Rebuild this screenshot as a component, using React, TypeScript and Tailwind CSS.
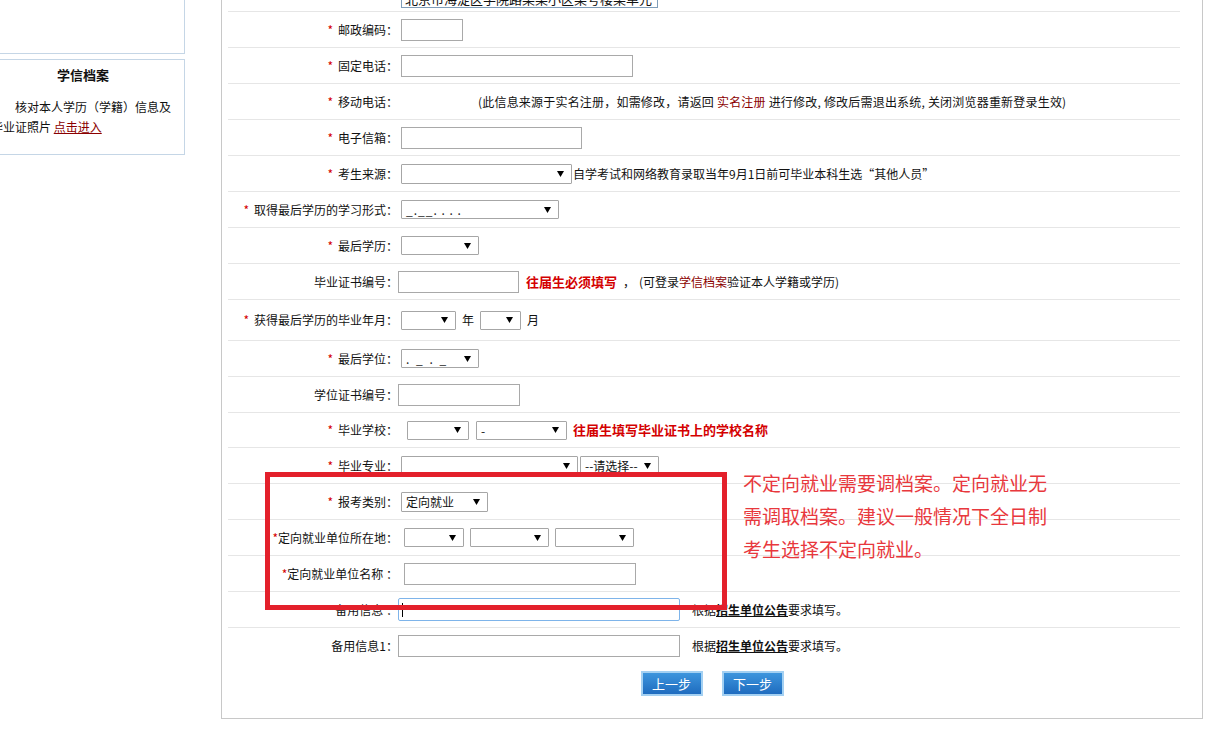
import React from "react";

const Star = () => <span className="mr-[5px] text-[#d40000]">*</span>;

const Label = ({ req, children }: { req?: boolean; children?: React.ReactNode }) => (
  <div className="w-[170px] shrink-0 text-right whitespace-nowrap">
    {req && <Star />}
    {children}
  </div>
);

const Arrow = () => (
  <svg width="7" height="6" viewBox="0 0 7 6" className="absolute right-[7px] top-1/2 -translate-y-1/2">
    <path d="M0 0H7L3.5 6Z" fill="#000" />
  </svg>
);

const Select = ({ className, text }: { className: string; text?: React.ReactNode }) => (
  <div className={"relative h-[19px] shrink-0 rounded-[1px] border border-[#a6a6a6] bg-white pl-[4px] text-[12px] leading-[17px] " + className}>
    {text}
    <Arrow />
  </div>
);

const Box = ({ className }: { className: string }) => (
  <div className={"h-[22px] shrink-0 border border-[#a9a9a9] bg-white " + className} />
);

const Row = ({ children, h = "h-[36px]", last }: { children: React.ReactNode; h?: string; last?: boolean }) => (
  <div className={"flex items-center " + h + (last ? "" : " border-b border-[#e6e6e6]")}>{children}</div>
);

const Hint = () => (
  <span>
    根据<b className="underline">招生单位公告</b>要求填写。
  </span>
);

export default function App() {
  return (
    <div className="relative h-[743px] w-[1227px] overflow-hidden bg-white text-[12px] text-[#111] [font-family:'SimSun','Noto_Sans_CJK_SC',sans-serif]">
      <div className="flex items-start">
        {/* sidebar, partly scrolled off to the left */}
        <aside className="ml-[-19px] w-[204px] shrink-0">
          <div className="mt-[-20px] h-[74px] border border-[#c5d6e6]" />
          <div className="mt-[5px] h-[96px] border border-[#c5d6e6] px-[9px]">
            <div className="pt-[5px] text-center text-[13px] font-bold leading-[20px]">学信档案</div>
            <p className="mt-[12px] indent-[24px] leading-[20px]">
              核对本人学历（学籍）信息及毕业证照片{" "}
              <a className="text-[#8b0000] underline">点击进入</a>
            </p>
          </div>
        </aside>

        {/* form panel */}
        <main className="ml-[36px] mt-[-40px] w-[982px] shrink-0 border border-[#c8c8c8] pt-[15px] pb-[22px]">
          <div className="ml-[6px] w-[952px]">
            <Row>
              <Label />
              <div className="ml-[3px] mt-[6px] h-[22px] w-[257px] overflow-hidden border border-[#7f9db9] px-[3px] text-[13px] leading-[24px]">
                北京市海淀区学院路某某小区某号楼某单元
              </div>
            </Row>
            <Row>
              <Label req>邮政编码：</Label>
              <Box className="ml-[3px] w-[62px]" />
            </Row>
            <Row>
              <Label req>固定电话：</Label>
              <Box className="ml-[3px] w-[232px]" />
            </Row>
            <Row>
              <Label req>移动电话：</Label>
              <div className="ml-[80px] whitespace-nowrap tracking-[0.2px]">
                (此信息来源于实名注册，如需修改，请返回 <span className="text-[#8b0000]">实名注册</span>{" "}
                进行修改, 修改后需退出系统, 关闭浏览器重新登录生效)
              </div>
            </Row>
            <Row>
              <Label req>电子信箱：</Label>
              <Box className="ml-[3px] w-[181px]" />
            </Row>
            <Row>
              <Label req>考生来源：</Label>
              <Select className="ml-[3px] h-[20px] w-[171px]" />
              <span className="ml-[1px] whitespace-nowrap">自学考试和网络教育录取当年9月1日前可毕业本科生选“其他人员”</span>
            </Row>
            <Row>
              <Label req>取得最后学历的学习形式：</Label>
              <Select className="ml-[3px] w-[158px]" text={<span className="tracking-[1px] text-[#222]">_.__. . . .</span>} />
            </Row>
            <Row>
              <Label req>最后学历：</Label>
              <Select className="ml-[3px] w-[78px]" />
            </Row>
            <Row>
              <Label>毕业证书编号：</Label>
              <Box className="w-[121px]" />
              <span className="ml-[7px] text-[13px] font-bold text-[#d40000]">往届生必须填写</span>
              <span className="ml-[6px]">，</span>
              <span className="ml-[4px] whitespace-nowrap">
                (可登录<span className="text-[#8b0000]">学信档案</span>验证本人学籍或学历)
              </span>
            </Row>
            <Row h="h-[41px]">
              <Label req>获得最后学历的毕业年月：</Label>
              <Select className="ml-[3px] w-[55px]" />
              <span className="ml-[6px]">年</span>
              <Select className="ml-[6px] w-[41px]" />
              <span className="ml-[6px]">月</span>
            </Row>
            <Row>
              <Label req>最后学位：</Label>
              <Select className="ml-[3px] w-[78px]" text={<span className="tracking-[2px] text-[#222]">. _ . _</span>} />
            </Row>
            <Row>
              <Label>学位证书编号：</Label>
              <Box className="w-[122px]" />
            </Row>
            <Row h="h-[35px]">
              <Label req>毕业学校：</Label>
              <Select className="ml-[9px] w-[62px]" />
              <Select className="ml-[7px] w-[91px]" text="-" />
              <span className="ml-[6px] text-[13px] font-bold text-[#d40000]">往届生填写毕业证书上的学校名称</span>
            </Row>
            <Row>
              <Label req>毕业专业：</Label>
              <Select className="ml-[3px] w-[177px]" />
              <Select className="ml-[2px] w-[79px]" text="--请选择--" />
            </Row>
            <Row>
              <Label req>报考类别：</Label>
              <Select className="ml-[3px] h-[20px] w-[87px]" text="定向就业" />
            </Row>
            <Row>
              <Label>
                <span className="text-[#d40000]">*</span>定向就业单位所在地：
              </Label>
              <Select className="ml-[6px] w-[60px]" />
              <Select className="ml-[6px] w-[79px]" />
              <Select className="ml-[6px] w-[79px]" />
            </Row>
            <Row>
              <Label>
                <span className="text-[#d40000]">*</span>定向就业单位名称 ：
              </Label>
              <Box className="ml-[6px] w-[232px]" />
            </Row>
            <Row>
              <Label>备用信息 ：</Label>
              <div className="flex h-[23px] w-[282px] shrink-0 items-center rounded-[2px] border border-[#7eb4ea] bg-white pl-[3px]">
                <div className="h-[14px] w-[1px] bg-[#000]" />
              </div>
              <span className="ml-[12px]">
                <Hint />
              </span>
            </Row>
            <Row last>
              <Label>备用信息1：</Label>
              <Box className="w-[282px]" />
              <span className="ml-[12px]">
                <Hint />
              </span>
            </Row>
          </div>

          <div className="mt-[7px] flex justify-center gap-[19px]">
            {["上一步", "下一步"].map((t) => (
              <button
                key={t}
                className="h-[25px] w-[62px] border-2 border-[#a3d0f2] bg-gradient-to-b from-[#3d95dd] to-[#1f6cbf] text-[13px] leading-[21px] text-white"
              >
                {t}
              </button>
            ))}
          </div>
        </main>
      </div>

      {/* annotation overlay */}
      <div className="absolute left-[265px] top-[472px] h-[138px] w-[462px] border-[5px] border-[#e3202b]" />
      <div className="absolute left-[743px] top-[466px] w-[310px] text-[19px] leading-[33px] text-[#e8383d] [font-family:'Noto_Sans_CJK_SC',sans-serif]">
        不定向就业需要调档案。定向就业无需调取档案。建议一般情况下全日制考生选择不定向就业。
      </div>
    </div>
  );
}
